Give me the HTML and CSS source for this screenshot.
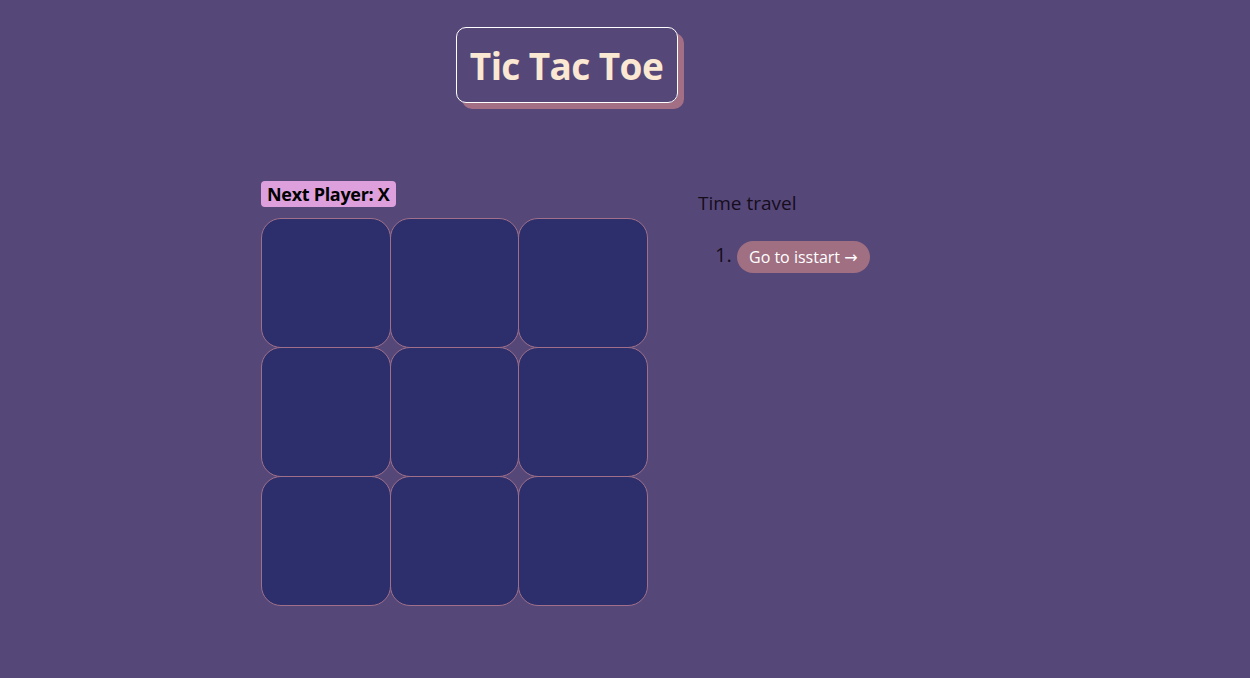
FILE: index.html
```html
<!DOCTYPE html>
<html>
<head>
<meta charset="utf-8">
<link rel="stylesheet" href="styles.css">
</head>
<body>
<div class="page">
  <header class="header">
    <h1 class="title">Tic Tac Toe</h1>
  </header>
  <main class="game">
    <section class="game-board">
      <div class="status">Next Player: X</div>
      <div class="board">
        <button class="square"></button>
        <button class="square"></button>
        <button class="square"></button>
        <button class="square"></button>
        <button class="square"></button>
        <button class="square"></button>
        <button class="square"></button>
        <button class="square"></button>
        <button class="square"></button>
      </div>
    </section>
    <section class="game-info">
      <div class="info-title">Time travel</div>
      <ol class="moves">
        <li><button class="move-btn">Go to isstart →</button></li>
      </ol>
    </section>
  </main>
</div>
</body>
</html>
```
FILE: styles.css
```css
html, body {
  margin: 0;
  padding: 0;
}
body {
  background: #564779;
  font-family: "Open Sans", "DejaVu Sans", sans-serif;
  width: 1250px;
  height: 678px;
  overflow: hidden;
}
.page {
  margin-left: 261px;
  width: 612px;
  padding-top: 27px;
}
.header {
  display: flex;
  justify-content: center;
}
.title {
  margin: 0 0 0 -1px;
  width: 222px;
  height: 76px;
  box-sizing: border-box;
  border: 1px solid #ffffff;
  border-radius: 10px;
  box-shadow: 6px 6px 0 #a36f85;
  color: #fbe8d3;
  font-size: 37px;
  font-weight: 700;
  letter-spacing: -0.6px;
  display: flex;
  align-items: center;
  justify-content: center;
}
.game {
  display: flex;
  margin-top: 78px;
}
.status {
  display: inline-block;
  background: #dda0dd;
  color: #000;
  font-size: 18px;
  font-weight: 700;
  letter-spacing: -0.3px;
  line-height: 26px;
  padding: 0 6px;
  border-radius: 4px;
  margin-bottom: 11px;
}
.board {
  display: grid;
  grid-template-columns: repeat(3, 128.5px);
  grid-template-rows: repeat(3, 129px);
  width: 386px;
}
.square {
  margin: 0 -1px -1px 0;
  padding: 0;
  background: #2c2f6b;
  border: 1px solid #a0708a;
  border-radius: 20px;
}
.game-info {
  margin-left: 51px;
  padding-top: 10px;
}
.info-title {
  font-size: 19px;
  color: #150d1c;
  line-height: 24px;
}
.moves {
  margin: 26px 0 0 0;
  padding-left: 39px;
  font-size: 20px;
  color: #150d1c;
}
.move-btn {
  font-family: inherit;
  font-size: 16px;
  color: #ffffff;
  background: #a06f82;
  border: none;
  border-radius: 16px;
  height: 32px;
  padding: 0 12px;
  vertical-align: middle;
}
```
